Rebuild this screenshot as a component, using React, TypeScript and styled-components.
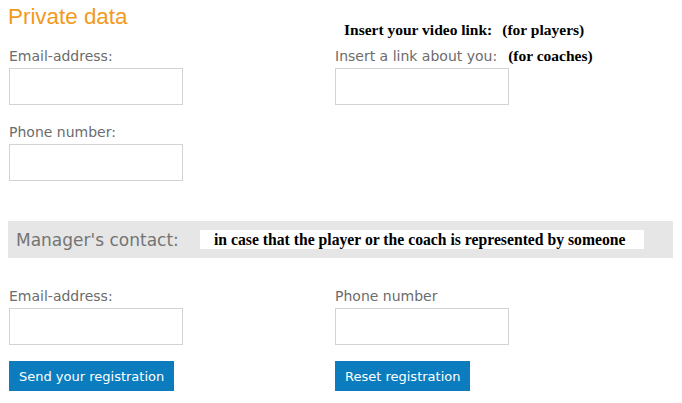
import React from "react";
import styled, { createGlobalStyle } from "styled-components";

const Global = createGlobalStyle`
  html, body { margin: 0; padding: 0; background: #fff; }
  body { font-family: "DejaVu Sans", Verdana, sans-serif; }
  * { box-sizing: border-box; }
`;

const Page = styled.div`
  width: 682px;
  height: 403px;
  padding: 0 0 0 9px;
  overflow: hidden;
`;

const Columns = styled.div<{ $mt?: number }>`
  display: grid;
  grid-template-columns: 326px 1fr;
  margin-top: ${(p) => p.$mt ?? 0}px;
`;

const Col = styled.div`
  display: flex;
  flex-direction: column;
  align-items: flex-start;
`;

const Title = styled.h1`
  margin: 0 0 0 -1px;
  height: 42px;
  padding-top: 4px;
  font-family: "Liberation Sans", Arial, sans-serif;
  font-weight: normal;
  font-size: 22.4px;
  line-height: 26px;
  color: #f29a1b;
`;

const Label = styled.label`
  display: block;
  height: 26px;
  padding-top: 6px;
  font-size: 14px;
  line-height: 16px;
  color: #6c6c6c;
  white-space: nowrap;
`;

const Note = styled.span<{ $gap?: number }>`
  font-family: "Liberation Serif", "Times New Roman", serif;
  font-weight: bold;
  font-size: 15.5px;
  color: #000;
  margin-left: ${(p) => p.$gap ?? 0}px;
`;

const NoteLine = styled.div`
  height: 42px;
  padding: 22px 0 0 9px;
  line-height: 16px;
  white-space: nowrap;
`;

const Input = styled.input<{ $mb?: number }>`
  display: block;
  width: 174px;
  height: 37px;
  border: 1px solid #d3d3d3;
  background: #fff;
  margin: 0 0 ${(p) => p.$mb ?? 0}px;
  padding: 0 4px;
  outline: none;
`;

const Bar = styled.div`
  margin: 40px 0 0 -1px;
  width: 665px;
  height: 37px;
  background: #e6e6e6;
  display: flex;
  align-items: center;
  padding-left: 8px;
`;

const BarTitle = styled.span`
  font-size: 17px;
  color: #747474;
  width: 184px;
  white-space: nowrap;
`;

const BarNote = styled.span`
  background: #fff;
  height: 19px;
  width: 444px;
  display: flex;
  align-items: center;
  padding-left: 14px;
  font-family: "Liberation Serif", "Times New Roman", serif;
  font-weight: bold;
  font-size: 15.7px;
  color: #000;
  white-space: nowrap;
`;

const Button = styled.button`
  margin-top: 16px;
  height: 30px;
  padding: 0 10px;
  border: none;
  background: #0b7dbe;
  color: #fff;
  font-family: "DejaVu Sans", Verdana, sans-serif;
  font-size: 13px;
  cursor: pointer;
`;

export default function App() {
  return (
    <Page>
      <Global />
      <Columns>
        <Col>
          <Title>Private data</Title>
          <Label>Email-address:</Label>
          <Input $mb={13} />
          <Label>Phone number:</Label>
          <Input />
        </Col>
        <Col>
          <NoteLine>
            <Note>Insert your video link:</Note>
            <Note $gap={10}>(for players)</Note>
          </NoteLine>
          <Label>
            Insert a link about you:
            <Note $gap={11}>(for coaches)</Note>
          </Label>
          <Input />
        </Col>
      </Columns>
      <Bar>
        <BarTitle>Manager's contact:</BarTitle>
        <BarNote>in case that the player or the coach is represented by someone</BarNote>
      </Bar>
      <Columns $mt={24}>
        <Col>
          <Label>Email-address:</Label>
          <Input />
          <Button>Send your registration</Button>
        </Col>
        <Col>
          <Label>Phone number</Label>
          <Input />
          <Button>Reset registration</Button>
        </Col>
      </Columns>
    </Page>
  );
}
